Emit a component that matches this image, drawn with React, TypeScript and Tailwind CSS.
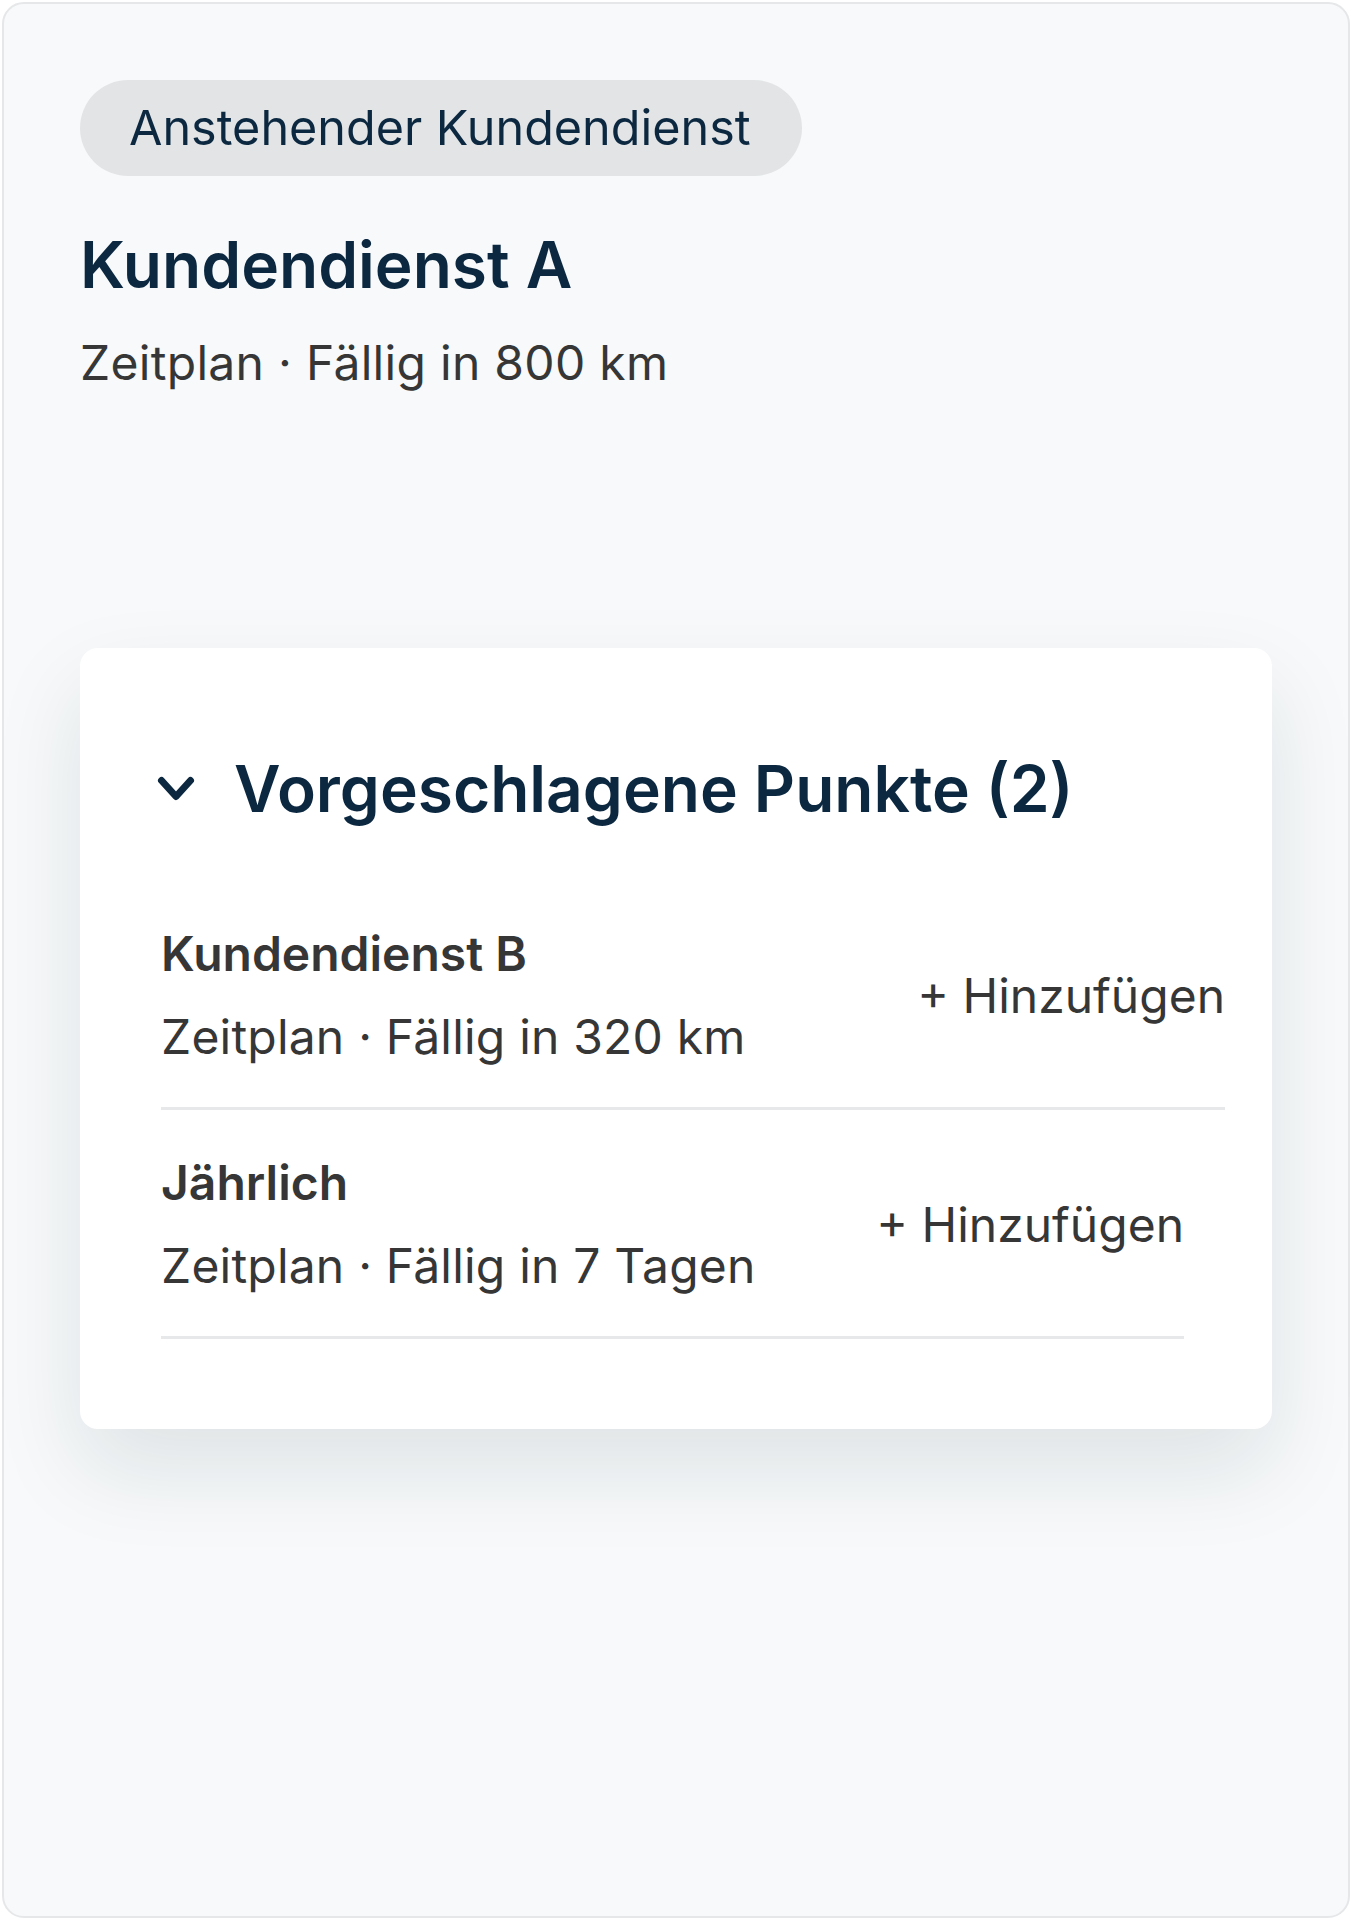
import React from 'react'

const items = [
  { title: 'Kundendienst B', due: 'Zeitplan · Fällig in 320 km', inset: false },
  { title: 'Jährlich', due: 'Zeitplan · Fällig in 7 Tagen', inset: true },
]

function Chevron() {
  return (
    <svg width="40" height="28" viewBox="0 0 40 28" fill="none" className="shrink-0">
      <path d="M5.5 5.5 L20 21.5 L34.5 5.5" stroke="#0b2840" strokeWidth="7" strokeLinecap="round" strokeLinejoin="round" />
    </svg>
  )
}

export default function App() {
  return (
    <div className="w-[1352px] h-[1920px] bg-white p-[2px]" style={{ fontFamily: 'Inter, "Noto Sans", sans-serif' }}>
      <div className="h-full rounded-[22px] border-2 border-[#e5e7e9] bg-[#f7f9fa] px-[76px] pt-[76px]">

        {/* Upcoming service */}
        <div className="inline-flex h-[96px] items-center rounded-full bg-[#e2e4e6] pl-[49px] pr-[51px] text-[48.5px] leading-none text-[#0b2840]">
          Anstehender Kundendienst
        </div>
        <h1 className="mt-[50px] text-[64px] font-semibold leading-[77px] text-[#0b2840]">Kundendienst A</h1>
        <div className="mt-[32px] text-[48px] leading-[56px] tracking-[0.3px] text-[#363636]">Zeitplan · Fällig in 800 km</div>

        {/* Suggested items card */}
        <div className="mt-[257px] rounded-[18px] bg-white pl-[76px] pr-[47px] pt-[102px] pb-[90px] shadow-[0_40px_90px_rgba(20,35,50,0.10)]">
          <div className="flex items-center gap-[38px]">
            <Chevron />
            <div className="text-[64px] font-semibold leading-[77px] text-[#0b2840]">Vorgeschlagene Punkte (2)</div>
          </div>
          <div className="mt-[54px] pl-[5px]">
            {items.map((it) => (
              <div
                key={it.title}
                className={`flex items-center justify-between border-b-[3px] border-[#e6e8ea] pt-[45px] pb-[42px] ${it.inset ? 'mr-[41px]' : ''}`}
              >
                <div className="flex flex-col gap-[27px]">
                  <div className="text-[48px] font-semibold leading-[56px] text-[#363636]">{it.title}</div>
                  <div className="text-[48px] leading-[56px] tracking-[0.2px] text-[#363636]">{it.due}</div>
                </div>
                <div className="text-[48px] leading-[56px] text-[#363636]">+ Hinzufügen</div>
              </div>
            ))}
          </div>
        </div>

      </div>
    </div>
  )
}
